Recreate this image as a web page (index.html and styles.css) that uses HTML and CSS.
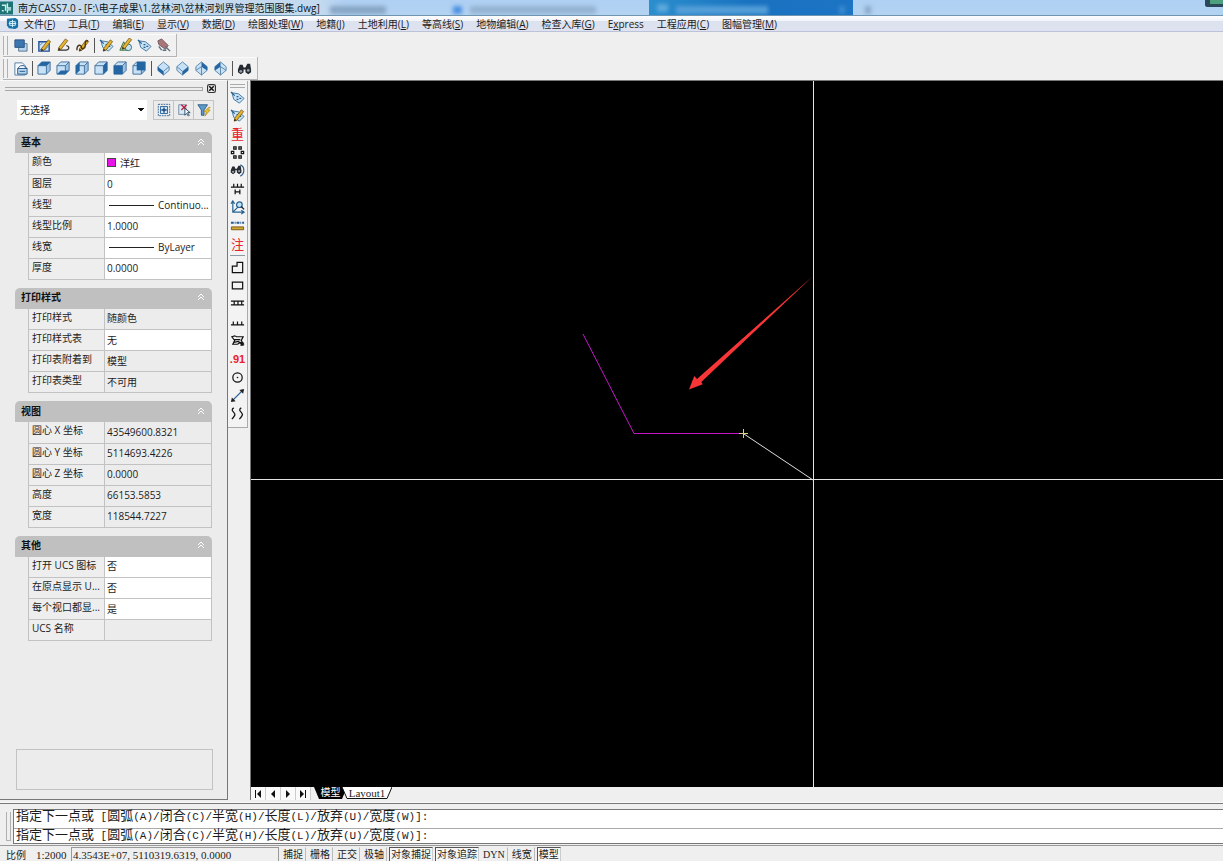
FILE: index.html
```html
<!DOCTYPE html>
<html lang="zh-CN">
<head>
<meta charset="utf-8">
<title>南方CASS7.0</title>
<link rel="stylesheet" href="styles.css">
</head>
<body>
<svg class="defs" aria-hidden="true">
  <symbol id="pencil" viewBox="0 0 16 16"><path d="M5 11 12 2l2.500 1.800L7.500 13 4.500 14z" fill="#e5b52e" stroke="#70501a" stroke-width=".8"/><path d="M4.500 14l.5-2.500L7 13z" fill="#222"/></symbol>
  <symbol id="tag" viewBox="0 0 16 16"><path d="M2 3l7 1 6 5-5 5-6-4z" fill="#c6e2f5" stroke="#45779c"/><path d="M1 2l4 4M7 7h2M10 9h2M7 10h2" stroke="#245c92" stroke-width="1.300"/></symbol>
  <symbol id="cube" viewBox="0 0 16 16"><path d="M1 5l4-4h9v9l-4 4H1z" fill="#c7e1f6"/><path d="M10 5l4-4v9l-4 4z" fill="#9cc3e5"/><path d="M1 5l4-4h9v9l-4 4H1zM1 5h9v9M10 5l4-4" fill="none" stroke="#426f9b"/></symbol>
  <symbol id="iso" viewBox="0 0 16 16"><path d="M8 1l6 5v4l-6 5-6-5V6z" fill="#c7e1f6" stroke="#5b86ab"/></symbol>
  <symbol id="bino" viewBox="0 0 16 16"><path d="M1 9l2-5h3l1 3h2l2-4h3l1 6v3l-3 2-3-2V9H7v3l-3 2-3-2z" fill="#252a30"/><circle cx="4" cy="11" r="1.500" fill="#8f9da8"/><circle cx="12" cy="10" r="1.500" fill="#8f9da8"/></symbol>
</svg>

<header class="titlebar">
  <svg class="app-icon" viewBox="0 0 14 14"><path fill="#1d7376" d="M0 0h14v14H0z"/><path d="M2 4h4v6M8 2v5h4M8 12V9h4M2 10h2" stroke="#c9f1e8" stroke-width="1.500" fill="none"/></svg>
  <h1 class="title">南方CASS7.0 - [F:\电子成果\1.岔林河\岔林河划界管理范围图集.dwg]</h1>
  <div class="glass" aria-hidden="true">
    <i class="smudge smudge-a"></i><i class="smudge smudge-dot"></i><i class="smudge smudge-b"></i>
    <i class="glass-tab"></i><i class="smudge smudge-icon"></i><i class="smudge smudge-c"></i><i class="smudge smudge-d"></i>
    <i class="smudge smudge-plus"></i><i class="corner"></i>
  </div>
</header>

<nav class="menubar">
  <svg class="menu-icon" viewBox="0 0 14 14"><path d="M1 2l9-1 3 2v8l-3 2-7-1-2-3z" fill="#1772a5"/><path d="M4 5h6v4H4zM7 3v8M3 7h8" stroke="#d7f4ff" fill="none"/></svg>
  <button>文件(<u>F</u>)</button><button>工具(<u>T</u>)</button><button>编辑(<u>E</u>)</button><button>显示(<u>V</u>)</button><button>数据(<u>D</u>)</button><button>绘图处理(<u>W</u>)</button><button>地籍(<u>J</u>)</button><button>土地利用(<u>L</u>)</button><button>等高线(<u>S</u>)</button><button>地物编辑(<u>A</u>)</button><button>检查入库(<u>G</u>)</button><button>E<u>x</u>press</button><button>工程应用(<u>C</u>)</button><button>图幅管理(<u>M</u>)</button>
</nav>

<div class="toolbars">
  <div class="toolbar" role="toolbar" aria-label="修改">
    <i class="grip"></i>
    <button aria-label="绘图次序"><svg viewBox="0 0 16 16"><path d="M6 6h9v8H6z" fill="#b7d5ee" stroke="#56748e"/><path d="M2 2h10v8H2z" fill="#3b76b0" stroke="#2b5480"/></svg></button>
    <i class="sep"></i>
    <button aria-label="编辑图案填充"><svg viewBox="0 0 16 16"><path d="M2 4h11v10H2z" fill="#d2e6f8" stroke="#244f94" stroke-width="1.500"/><path d="M3 8l4-4M3 13l9-9M8 13l5-5" stroke="#4a7db4"/><use href="#pencil"/></svg></button>
    <button aria-label="编辑多段线"><svg viewBox="0 0 16 16"><path d="M2 13h9q4-1 2-4l-2-1" fill="none" stroke="#333" stroke-width="1.300"/><use href="#pencil" x="-2" y="-1"/></svg></button>
    <button aria-label="编辑样条曲线"><svg viewBox="0 0 16 16"><use href="#pencil"/><path d="M2 13c0-7 5-6 5-3s4 1 4-2-1-5 3-5" fill="none" stroke="#4c3413" stroke-width="1.500"/></svg></button>
    <i class="sep"></i>
    <button aria-label="编辑属性"><svg viewBox="0 0 16 16"><use href="#tag"/><use href="#pencil"/></svg></button>
    <button aria-label="块属性"><svg viewBox="0 0 16 16"><path d="M2 13l4-9 5 9z" fill="#acd3a9" stroke="#376d45"/><circle cx="11" cy="10" r="3.500" fill="#c6e2f5" stroke="#356f73"/><use href="#pencil" y="-2"/></svg></button>
    <button aria-label="同步属性"><svg viewBox="0 0 16 16"><use href="#tag"/></svg></button>
    <button aria-label="提取属性"><svg viewBox="0 0 16 16"><path d="M2 3l4-2 7 7-3 4-7-5z" fill="#a9767a" stroke="#75595f"/><path d="M10 9l5 5M7 13h4M3 9l3 4" stroke="#596e80" stroke-width="1.500"/></svg></button>
  </div>
  <div class="toolbar" role="toolbar" aria-label="视图">
    <i class="grip"></i>
    <button aria-label="命名视图"><svg viewBox="0 0 16 16"><path d="M2 2h8l3 3v10H2z" fill="#f7fbff" stroke="#577d9f"/><path d="M5 8h10v6H5z" fill="#b7d8f0" stroke="#23588b"/><path d="M5 8l3-3h4l3 3M7 11h6" fill="none" stroke="#23588b"/></svg></button>
    <i class="sep"></i>
    <button aria-label="俯视"><svg viewBox="0 0 16 16"><use href="#cube"/><path d="M1 5l4-4h9l-4 4z" fill="#2465a3"/></svg></button>
    <button aria-label="仰视"><svg viewBox="0 0 16 16"><use href="#cube"/><path d="M1 14l4-4h9l-4 4z" fill="#2465a3"/></svg></button>
    <button aria-label="左视"><svg viewBox="0 0 16 16"><use href="#cube"/><path d="M1 5l4-4v9l-4 4z" fill="#2465a3"/></svg></button>
    <button aria-label="右视"><svg viewBox="0 0 16 16"><use href="#cube"/><path d="M10 5l4-4v9l-4 4z" fill="#2465a3"/></svg></button>
    <button aria-label="主视"><svg viewBox="0 0 16 16"><use href="#cube"/><path d="M1 5h9v9H1z" fill="#2465a3"/></svg></button>
    <button aria-label="后视"><svg viewBox="0 0 16 16"><use href="#cube"/><path d="M5 1h9v9H5z" fill="#2465a3"/></svg></button>
    <i class="sep"></i>
    <button aria-label="西南等轴测"><svg viewBox="0 0 16 16"><use href="#iso"/><path d="M2 6l6 5v4l-6-5z" fill="#2465a3"/><path d="M8 11l6-5M8 11v4" stroke="#5b86ab"/></svg></button>
    <button aria-label="东南等轴测"><svg viewBox="0 0 16 16"><use href="#iso"/><path d="M14 6l-6 5v4l6-5z" fill="#2465a3"/><path d="M8 11L2 6M8 11v4" stroke="#5b86ab"/></svg></button>
    <button aria-label="东北等轴测"><svg viewBox="0 0 16 16"><use href="#iso"/><path d="M8 1l6 5v4L8 6z" fill="#2465a3"/><path d="M2 10l6-4v9" fill="none" stroke="#5b86ab"/></svg></button>
    <button aria-label="西北等轴测"><svg viewBox="0 0 16 16"><use href="#iso"/><path d="M8 1L2 6v4l6-4z" fill="#2465a3"/><path d="M14 10L8 6v9" fill="none" stroke="#5b86ab"/></svg></button>
    <i class="sep"></i>
    <button aria-label="相机"><svg viewBox="0 0 16 16"><use href="#bino"/></svg></button>
  </div>
</div>

<main class="workspace">
  <aside class="panel">
    <div class="panel-head"><i class="panel-grip"></i><button class="close" aria-label="关闭"><svg viewBox="0 0 8 8"><rect x=".5" y=".5" width="7" height="7" rx="1.500" fill="none" stroke="#333"/><path d="M2 2l4 4M6 2L2 6" stroke="#111" stroke-width="1.300"/></svg></button></div>
    <div class="picker">
      <select aria-label="选择对象"><option>无选择</option></select>
      <div class="picker-buttons">
        <button aria-label="切换PICKADD"><svg viewBox="0 0 16 16"><path d="M1.500 1.500h13v13h-13z" fill="none" stroke="#245b91" stroke-dasharray="2 1"/><path d="M4 4h8v8H4z" fill="#cfe7fa" stroke="#245b91"/><path d="M8 5v6M5 8h6" stroke="#12427b" stroke-width="1.500"/></svg></button>
        <button aria-label="选择对象"><svg viewBox="0 0 16 16"><path d="M2 2h8v11H2z" fill="#d9eaf5" stroke="#6c879b"/><path d="M5 2l6 6M11 2L5 8" stroke="#c21c3b" stroke-width="1.500"/><path d="M9 6v8l2-2 2 3 1-1-2-3h3z" fill="#fff" stroke="#1c4260"/></svg></button>
        <button aria-label="快速选择"><svg viewBox="0 0 16 16"><path d="M1 2h11L8 8v6H5V8z" fill="#5d9acb" stroke="#265781"/><path d="M13 5L8 10h3l-2 5 6-7h-3l3-3z" fill="#f3ce32" stroke="#a87c0b" stroke-width=".7"/></svg></button>
      </div>
    </div>

    <section class="group">
      <h2>基本<button aria-label="折叠"><svg viewBox="0 0 8 8"><path d="M1 4l3-3 3 3M1 7l3-3 3 3"/></svg></button></h2>
      <table>
        <tr><th scope="row">颜色</th><td class="edit"><span class="cell"><i class="swatch"></i>洋红</span></td></tr>
        <tr><th scope="row">图层</th><td class="edit">0</td></tr>
        <tr><th scope="row">线型</th><td class="edit"><span class="cell"><i class="line"></i>Continuo...</span></td></tr>
        <tr><th scope="row">线型比例</th><td class="edit">1.0000</td></tr>
        <tr><th scope="row">线宽</th><td class="edit"><span class="cell"><i class="line"></i>ByLayer</span></td></tr>
        <tr><th scope="row">厚度</th><td class="edit">0.0000</td></tr>
      </table>
    </section>
    <section class="group">
      <h2>打印样式<button aria-label="折叠"><svg viewBox="0 0 8 8"><path d="M1 4l3-3 3 3M1 7l3-3 3 3"/></svg></button></h2>
      <table>
        <tr><th scope="row">打印样式</th><td>随颜色</td></tr>
        <tr><th scope="row">打印样式表</th><td class="edit">无</td></tr>
        <tr><th scope="row">打印表附着到</th><td>模型</td></tr>
        <tr><th scope="row">打印表类型</th><td>不可用</td></tr>
      </table>
    </section>
    <section class="group">
      <h2>视图<button aria-label="折叠"><svg viewBox="0 0 8 8"><path d="M1 4l3-3 3 3M1 7l3-3 3 3"/></svg></button></h2>
      <table>
        <tr><th scope="row">圆心 X 坐标</th><td>43549600.8321</td></tr>
        <tr><th scope="row">圆心 Y 坐标</th><td>5114693.4226</td></tr>
        <tr><th scope="row">圆心 Z 坐标</th><td>0.0000</td></tr>
        <tr><th scope="row">高度</th><td>66153.5853</td></tr>
        <tr><th scope="row">宽度</th><td>118544.7227</td></tr>
      </table>
    </section>
    <section class="group">
      <h2>其他<button aria-label="折叠"><svg viewBox="0 0 8 8"><path d="M1 4l3-3 3 3M1 7l3-3 3 3"/></svg></button></h2>
      <table>
        <tr><th scope="row">打开 UCS 图标</th><td class="edit">否</td></tr>
        <tr><th scope="row">在原点显示 U...</th><td class="edit">否</td></tr>
        <tr><th scope="row">每个视口都显...</th><td class="edit">是</td></tr>
        <tr><th scope="row">UCS 名称</th><td></td></tr>
      </table>
    </section>
    <div class="hint"></div>
  </aside>

  <div class="side">
    <div class="side-tools" role="toolbar" aria-label="CASS工具">
      <i class="side-grip"></i>
      <button aria-label="查看实体编码"><svg viewBox="0 0 16 16"><use href="#tag"/></svg></button>
      <button aria-label="加入实体编码"><svg viewBox="0 0 16 16"><use href="#tag"/><use href="#pencil"/></svg></button>
      <button class="glyph">重</button>
      <button aria-label="批量选取"><svg class="ink" viewBox="0 0 16 16"><path d="M4 2h2.500v2.500H4zM9.500 2H12v2.500H9.500zM1.500 6.800H4v2.500H1.500zM12 6.800h2.500v2.500H12zM4 11.500h2.500V14H4zM9.500 11.500H12V14H9.500z"/></svg></button>
      <button aria-label="查找"><svg viewBox="0 0 16 16"><use href="#bino" width="13" height="14"/><path d="M11 2c5 2 5 9 0 12" fill="none" stroke="#315f91" stroke-width="1.300"/></svg></button>
      <button aria-label="坎"><svg class="ink" viewBox="0 0 16 16"><path d="M1 6.500h14M4 3v3M8 3v3M12 3v3M5.500 9v5M10.500 9v5M5.500 11.500h5"/></svg></button>
      <button aria-label="坐标查询"><svg viewBox="0 0 16 16"><path d="M3 2v11h11M3 13l6-6M1 4l2-3 2 3M12 11l3 2-3 2" fill="none" stroke="#286594" stroke-width="1.300"/><circle cx="10" cy="5" r="3" fill="#c6e2f5" stroke="#286594" stroke-width="1.300"/><path d="M12 7l3 3" stroke="#222" stroke-width="1.500"/></svg></button>
      <button aria-label="距离"><svg viewBox="0 0 16 16"><path d="M1 5h14" stroke="#235c97" stroke-width="2" stroke-dasharray="3 1 1 1"/><path d="M1.500 9.500h13v3h-13z" fill="#d4a82e" stroke="#75591a"/></svg></button>
      <button class="glyph">注</button>
      <i class="side-sep"></i>
      <button aria-label="多点房屋"><svg class="ink" viewBox="0 0 16 16"><path d="M2.500 13.500v-7h5v-4h6v11z"/></svg></button>
      <button aria-label="四点房屋"><svg class="ink" viewBox="0 0 16 16"><path d="M2.500 4.500h11v7h-11z"/></svg></button>
      <button aria-label="围墙"><svg class="ink" viewBox="0 0 16 16"><path d="M1 5.500h14M1 9.500h14M4.500 5v5M8.500 5v5M12.500 5v5"/></svg></button>
      <button aria-label="陡坎"><svg class="ink" viewBox="0 0 16 16"><path d="M1 10.500h14M3.500 7v3M8 7v3M12.500 7v3"/></svg></button>
      <button aria-label="复制实体"><svg class="ink" viewBox="0 0 16 16"><path d="M2 4l3-1 2 1h7l-2 4 2 3-3-1-3 2H3l2-4zM5 7h6M4 10l5-1 5 4M11 13h3v-3"/></svg></button>
      <button class="glyph height">.91</button>
      <button aria-label="控制点"><svg class="ink" viewBox="0 0 16 16"><circle cx="8" cy="8" r="5"/><path d="M7.200 8h1.600"/></svg></button>
      <button aria-label="直线"><svg viewBox="0 0 16 16"><path d="M2 14L14 2" stroke="#2e649d" stroke-width="1.500"/><path d="M1 15l1-5 4 4zM15 1l-5 1 4 4z" fill="#222"/></svg></button>
      <button aria-label="曲线"><svg class="ink" viewBox="0 0 16 16"><path d="M4 2c-5 3 3 5 1 8q-1 2-3 4M12 2c-5 3 3 5 1 8q-1 2-3 4"/></svg></button>
    </div>
  </div>

  <div class="view">
    <svg class="drawing" role="img" aria-label="绘图区">
      <path d="M332 253l51 99.500h109" fill="none" stroke="#c416c8"/>
      <path d="M493 353l69 46" stroke="#ddd"/>
      <path d="M562 195L450.300 301l1.400 2.300-13.700 5.200 5.300-13.500 2.700 3z" fill="#fa3538"/>
      <path d="M488 352.500h9M492.500 348v9" stroke="#d8cf8a"/>
      <line x1="0" x2="100%" y1="398.500" y2="398.500" stroke="#e4e4e4"/>
      <line x1="562.500" x2="562.500" y1="0" y2="100%" stroke="#e4e4e4"/>
    </svg>
    <div class="sheets">
      <button class="nav" aria-label="第一个"><svg viewBox="0 0 8 8"><path d="M1 0h1v8H1zM7 0v8L3 4z"/></svg></button>
      <button class="nav" aria-label="上一个"><svg viewBox="0 0 8 8"><path d="M6 0v8L2 4z"/></svg></button>
      <button class="nav" aria-label="下一个"><svg viewBox="0 0 8 8"><path d="M2 0v8l4-4z"/></svg></button>
      <button class="nav" aria-label="最后一个"><svg viewBox="0 0 8 8"><path d="M6 0h1v8H6zM1 0v8l4-4z"/></svg></button>
      <button class="sheet active"><svg viewBox="0 0 33 13" preserveAspectRatio="none"><path d="M0 0h33l-5 12H5z" fill="#000"/></svg><span>模型</span></button>
      <button class="sheet layout"><svg viewBox="0 0 50 13" preserveAspectRatio="none"><path d="M0 0l5 11.500h40L50 0" fill="#fff" stroke="#111"/></svg><span>Layout1</span></button>
    </div>
  </div>
</main>

<section class="command">
  <i class="command-grip"></i>
  <div class="command-lines">
    <div class="history"><b>指定下一点或</b> [<b>圆弧</b>(A)/<b>闭合</b>(C)/<b>半宽</b>(H)/<b>长度</b>(L)/<b>放弃</b>(U)/<b>宽度</b>(W)]:</div>
    <label class="prompt"><span><b>指定下一点或</b> [<b>圆弧</b>(A)/<b>闭合</b>(C)/<b>半宽</b>(H)/<b>长度</b>(L)/<b>放弃</b>(U)/<b>宽度</b>(W)]:</span><input type="text"></label>
  </div>
</section>

<footer class="status">
  <span class="scale">比例</span><span class="ratio">1:2000</span>
  <output class="coords">4.3543E+07, 5110319.6319, 0.0000</output>
  <div class="modes">
    <button>捕捉</button><button>栅格</button><button>正交</button><button>极轴</button><button class="on">对象捕捉</button><button class="on">对象追踪</button><button>DYN</button><button>线宽</button><button class="on">模型</button>
  </div>
</footer>
</body>
</html>
```
FILE: styles.css
```css
* { box-sizing: border-box; }
html, body { height: 100%; }
body {
  margin: 0;
  display: flex;
  flex-direction: column;
  overflow: hidden;
  background: #efefef;
  color: #1c1c1c;
  font: 10px/14px "Open Sans", "Noto Sans CJK SC", sans-serif;
}
button, input, select { font: inherit; color: inherit; margin: 0; padding: 0; border: 0; background: none; }
i { font-style: normal; display: block; flex: none; }
svg { display: block; flex: none; }
.defs { position: absolute; width: 0; height: 0; }

/* Title bar */
.titlebar {
  position: relative;
  flex: none;
  display: flex;
  align-items: center;
  height: 16px;
  overflow: hidden;
  background: linear-gradient(#afd0f3, #b4d3f2);
  border-bottom: 1px solid #6f95b0;
}
.app-icon { width: 13px; height: 14px; position: relative; z-index: 1; }
.title {
  position: relative;
  z-index: 1;
  margin: 0 0 0 5px;
  font-size: 10px;
  font-weight: 400;
  line-height: 14px;
  color: #0c1620;
  white-space: nowrap;
}
.glass { position: absolute; inset: 0; background: linear-gradient(90deg, #c9dced, #c3d9ef 320px, transparent 345px); }
.glass-tab { position: absolute; left: 649px; top: 0; width: 204px; height: 15px; background: linear-gradient(90deg, #2b8fcd, #1971c0 50%, #1c74c4); }
.smudge { position: absolute; top: 6px; height: 8px; filter: blur(2px); }
.smudge-a { left: 330px; width: 56px; background: #87a5c4; }
.smudge-dot { left: 453px; width: 9px; background: #4a90e0; }
.smudge-b { left: 470px; width: 126px; background: #94b2d1; }
.smudge-icon { left: 657px; top: 4px; width: 11px; background: #5fa9dc; }
.smudge-c { left: 676px; width: 92px; background: #559fd8; }
.smudge-d { left: 839px; width: 6px; background: #3d8bd0; }
.smudge-plus { left: 865px; width: 6px; background: #86a6c8; }
.corner { position: absolute; right: 0; top: 0; width: 18px; height: 7px; background: #4ca07c; border: solid #2c4757; border-width: 0 0 3px 5px; border-radius: 0 0 0 3px; }

/* Menu */
.menubar {
  flex: none;
  display: flex;
  align-items: center;
  gap: 13px;
  height: 16px;
  padding-left: 6px;
  background: linear-gradient(#fdfdfe, #f0f3f9 35%, #dce2ef 36%, #dfe2f0);
  border-bottom: 1px solid #bcc3d8;
}
.menu-icon { width: 13px; height: 13px; margin-right: -8px; }
.menubar button { line-height: 14px; white-space: nowrap; }

/* Toolbars */
.toolbars { flex: none; display: flex; flex-direction: column; align-items: flex-start; padding: 2px 0 0 3px; }
.toolbar {
  display: flex;
  align-items: center;
  height: 23px;
  padding-right: 3px;
  border: solid #b4b4b4;
  border-width: 0 1px 1px 0;
  background: #f1f1f1;
  box-shadow: inset 0 1px #fafafa;
}
.grip { width: 5px; height: 19px; margin: 0 3px 0 0; border: solid #b0b0b0; border-width: 0 1px; }
.toolbar button { display: grid; place-items: center; width: 19px; height: 20px; }
.toolbar svg { width: 15px; height: 15px; }
.sep { width: 1px; height: 15px; margin: 0 2px; background: #555; }

/* Workspace */
.workspace { flex: 1; display: flex; min-height: 0; border-bottom: 1px solid #fafafa; }
.panel {
  flex: none;
  display: flex;
  flex-direction: column;
  width: 228px;
  padding: 3px 15px 9px;
  background: #ececec;
  border: solid #777;
  border-width: 0 1px 1px 0;
  border-top: 1px solid #f8f8f8;
  margin-bottom: 2px;
}
.panel-head { display: flex; align-items: center; gap: 4px; height: 9px; margin: 0 -4px 7px -10px; }
.panel-grip { flex: 1; height: 4px; border: solid #a8a8a8; border-width: 1px 1px 1px 0; }
.close svg { width: 9px; height: 9px; }
.picker { display: flex; gap: 6px; height: 20px; margin-right: -2px; }
.picker select {
  flex: 1;
  min-width: 0;
  margin-left: 2px;
  padding: 0 4px 0 3px;
  appearance: none;
  background-color: #fff;
  background-image: linear-gradient(to bottom right, #111 50%, transparent 51%), linear-gradient(to bottom left, #111 50%, transparent 51%);
  background-size: 3px 4px, 3px 4px;
  background-position: right 3px center, right 6px center;
  background-repeat: no-repeat;
}
.picker-buttons { display: flex; border-left: 1px solid #c3c3c3; }
.picker-buttons button { display: grid; place-items: center; width: 20px; height: 20px; border: solid #c3c3c3; border-width: 1px 1px 1px 0; }
.picker-buttons svg { width: 14px; height: 14px; }
.group { margin-top: 8px; width: 197px; }
.picker + .group { margin-top: 12px; }
.group h2 {
  display: flex;
  align-items: center;
  justify-content: space-between;
  height: 21px;
  margin: 0;
  padding: 0 7px 2px 6px;
  border-radius: 5px 5px 0 0;
  background: #c0c0c0;
  font-size: 10px;
  font-weight: 700;
  color: #111;
}
.group h2 svg { width: 8px; height: 8px; fill: none; stroke: #fff; }
.group table { width: 184px; margin-left: 13px; border-collapse: collapse; table-layout: fixed; }
.group th, .group td { height: 21px; padding: 0 0 1px 2px; border: 1px solid #c2c2c2; text-align: left; font-weight: 400; line-height: 14px; white-space: nowrap; overflow: hidden; }
.group tr:first-child > * { border-top: 0; }
.group th { width: 76px; padding: 0 0 4px 3px; background: #eee; }
.group .edit { background: #fff; }
.cell { display: flex; align-items: center; }
.swatch { width: 9px; height: 9px; margin-right: 4px; background: #e815e8; border: 1px solid #444; }
.line { width: 45px; height: 1px; margin: 0 4px 0 2px; background: #222; }
.hint { height: 41px; margin: auto -1px 0 0; width: 197px; border: 1px solid #c2c2c2; align-self: flex-end; }

/* Side toolbar */
.side { flex: none; width: 22px; padding-top: 1px; }
.side-tools {
  display: flex;
  flex-direction: column;
  height: 347px;
  margin-right: 2px;
  padding: 3px 0 4px;
  background: #f3f3f3;
  border: solid #aaa;
  border-width: 0 1px 1px 0;
}
.side-grip { height: 4px; margin: 0 2px; border: solid #aaa; border-width: 1px 0; }
.side-tools button { flex: 1; min-height: 0; display: grid; place-items: center; width: 19px; }
.side-tools svg { width: 15px; height: 15px; }
.ink { fill: none; stroke: #111; stroke-width: 1.3; }
.side-sep { height: 1px; margin: 2px; background: #8d9aa5; }
.side-tools .glyph { color: #e8202a; font-size: 13px; line-height: 18px; }
.side-tools .height { font-family: "Liberation Sans", sans-serif; font-size: 11px; font-weight: 700; }

/* Drawing and layout tabs */
.view { flex: 1; display: flex; flex-direction: column; min-width: 0; border: solid #777; border-width: 1px 0 0 1px; margin-bottom: 2px; }
.drawing { flex: 1; width: 100%; min-height: 0; background: #000; }
.sheets { flex: none; display: flex; height: 13px; }
.nav { width: 15px; height: 13px; display: grid; place-items: center; background: #fafafa; border-right: 1px solid #ccc; }
.nav svg { width: 8px; height: 8px; fill: #111; }
.sheet { display: grid; align-items: start; font: 11px/12px "Liberation Serif", "Noto Sans CJK SC", serif; }
.sheet > * { grid-area: 1 / 1; width: 100%; height: 13px; }
.active { width: 33px; margin-left: 3px; color: #fff; }
.active span { font-size: 10px; }
.layout { width: 50px; margin-left: -5px; }

/* Command line */
.command { flex: none; display: flex; height: 43px; padding: 5px 0 1px 6px; border-top: 1px solid #777; border-bottom: 1px solid #999; }
.command-grip { width: 5px; margin: 3px 2px 3px 0; border: solid #b0b0b0; border-width: 0 1px 1px; }
.command-lines { flex: 1; min-width: 0; background: #fff; border: solid #777; border-width: 1px 0 1px 1px; font: 11px/14px "Liberation Mono", "Noto Sans CJK SC", monospace; }
.command-lines b { font-weight: 400; font-size: 13px; line-height: 14px; }
.history, .prompt { padding-left: 2px; white-space: nowrap; }
.history { height: 19px; line-height: 14px; border-bottom: 1px solid #aaa; }
.prompt { display: flex; height: 15px; line-height: 14px; }
.prompt input { flex: 1; min-width: 0; outline: 0; }

/* Status bar */
.status { flex: none; display: flex; height: 15px; padding: 1px 0 0 6px; overflow: hidden; line-height: 17px; white-space: nowrap; }
.status .scale { width: 30px; }
.status .ratio { width: 35px; }
.ratio, .coords { font-family: "Liberation Serif", serif; font-size: 11px; }
.coords { width: 208px; height: 14px; padding-left: 1px; border: solid #999; border-width: 1px 1px 0; line-height: 14px; }
.status .ratio { line-height: 16px; }
.status .scale { line-height: 16px; }
.modes { display: flex; gap: 2px; margin-left: 2px; font-family: "Liberation Serif", "Noto Sans CJK SC", serif; }
.modes button { height: 14px; padding: 0 2px; border: solid transparent; border-width: 1px 1px 0 0; border-right-color: #bbb; line-height: 13px; }
.modes .on { padding: 0 1px; border: solid #555; border-width: 1px 1px 0; border-right-color: #ccc; background: #f6f6f6; }
```
